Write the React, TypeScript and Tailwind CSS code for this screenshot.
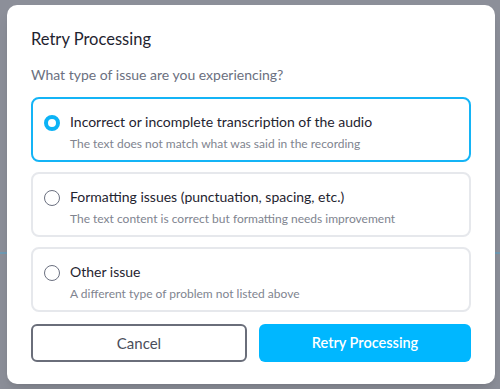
import { useState } from 'react';

const options = [
  {
    id: 'transcription',
    label: 'Incorrect or incomplete transcription of the audio',
    hint: 'The text does not match what was said in the recording',
  },
  {
    id: 'formatting',
    label: 'Formatting issues (punctuation, spacing, etc.)',
    hint: 'The text content is correct but formatting needs improvement',
  },
  {
    id: 'other',
    label: 'Other issue',
    hint: 'A different type of problem not listed above',
  },
];

export default function App() {
  const [selected, setSelected] = useState('transcription');

  return (
    <div
      className="relative w-[500px] h-[389px] bg-[#8c8f99] overflow-hidden"
      style={{ fontFamily: 'Lato, "Noto Sans", sans-serif' }}
    >
      {/* faint line from the page underneath */}
      <div className="absolute left-0 right-0 top-[252px] h-[2px] bg-[#6f9ab3]" />

      {/* Modal */}
      <div className="relative ml-[7px] mt-[5px] w-[488px] h-[379px] bg-white rounded-[10px] px-6 pt-[24px] shadow-lg">
        <h2 className="text-[16.5px] leading-5 text-[#1f2430] font-normal">Retry Processing</h2>
        <p className="mt-[16px] text-[14px] leading-5 text-[#6b7080]">What type of issue are you experiencing?</p>

        <div className="mt-[12px] flex flex-col gap-[10px]">
          {options.map(opt => {
            const active = selected === opt.id;
            return (
              <button
                key={opt.id}
                onClick={() => setSelected(opt.id)}
                className={`w-full h-[65px] text-left rounded-[8px] border-2 px-[11px] flex items-start pt-[13px] ${
                  active ? 'border-[#14b4f6]' : 'border-[#e6e8ec]'
                }`}
              >
                <span
                  className={`mt-[3px] shrink-0 w-[16px] h-[16px] rounded-full flex items-center justify-center ${
                    active ? 'border-[4px] border-[#0cb3f6]' : 'border-[1.5px] border-[#6b7080]'
                  }`}
                />
                <span className="ml-[10px] flex flex-col">
                  <span className="text-[14px] leading-5 text-[#1f2430]">{opt.label}</span>
                  <span className="mt-[4px] text-[12px] leading-4 text-[#80848f]">{opt.hint}</span>
                </span>
              </button>
            );
          })}
        </div>

        <div className="mt-[12px] flex gap-3">
          <button className="flex-1 h-[38px] rounded-[6px] border-2 border-[#6a6e7a] text-[15px] text-[#4a4e5a]">
            Cancel
          </button>
          <button className="flex-1 h-[38px] rounded-[6px] bg-[#00b7ff] text-[14.5px] font-semibold text-white">
            Retry Processing
          </button>
        </div>
      </div>
    </div>
  );
}
